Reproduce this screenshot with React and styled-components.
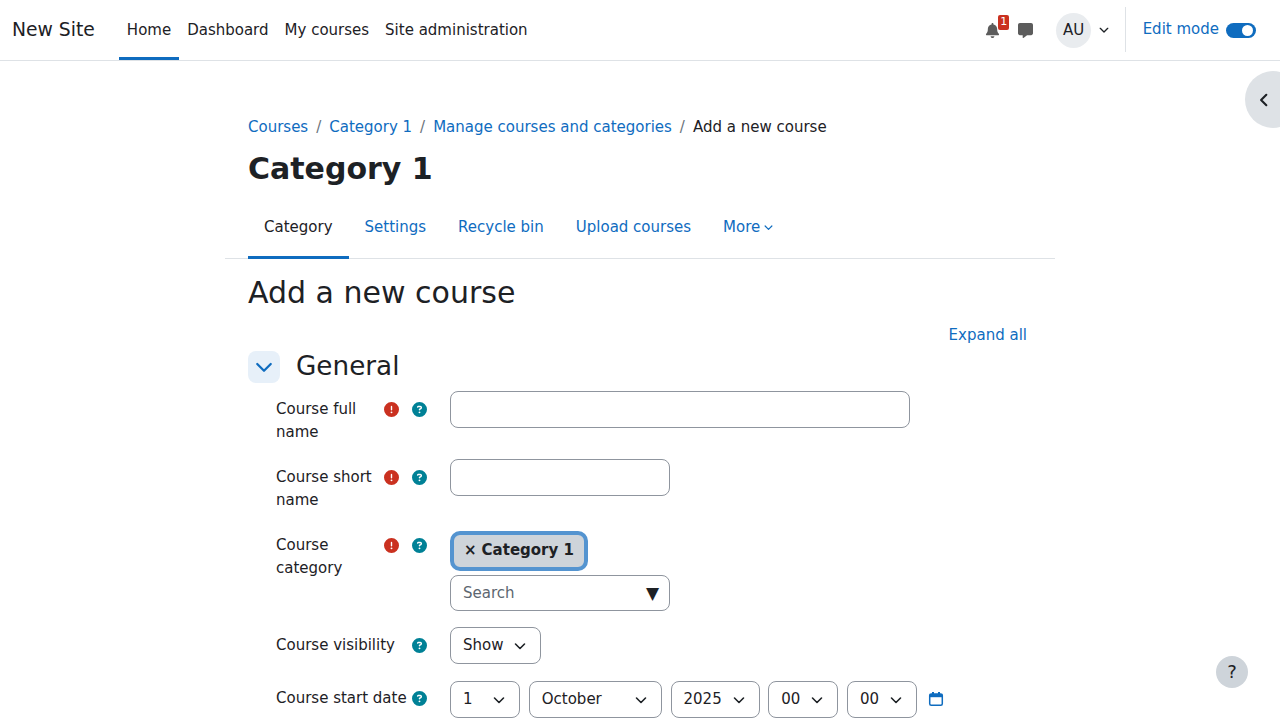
import React from 'react';
import styled, { createGlobalStyle } from 'styled-components';
import { FaBell, FaMessage, FaCircleExclamation, FaCircleQuestion } from 'react-icons/fa6';

const Global = createGlobalStyle`
  html, body { margin: 0; padding: 0; height: 720px; overflow: hidden; background: #fff; }
  body { font-family: "DejaVu Sans", sans-serif; font-size: 15px; line-height: 22.5px; color: #1d2125; }
  * { box-sizing: border-box; }
`;

const Page = styled.div`
  position: relative;
  width: 1280px;
  height: 720px;
  overflow: hidden;
`;
const NavBar = styled.header`
  display: flex;
  align-items: stretch;
  height: 61px;
  border-bottom: 1px solid #dee2e6;
  padding: 0 24px 0 12px;
`;
const Brand = styled.div`
  font-size: 18.75px;
  line-height: 59px;
  margin-right: 24px;
`;
const NavLink = styled.div`
  display: flex;
  align-items: center;
  padding: 3px 8px 0;
  color: #1d2125;
  height: 60px;
  border-bottom: 3px solid ${p => (p.$active ? '#0f6cbf' : 'transparent')};
`;
const NavSpacer = styled.div`flex: 1;`;
const NavIcon = styled.div`
  position: relative;
  width: 16px;
  display: flex;
  align-items: center;
  justify-content: center;
  color: #5c5c5c;
  margin-left: ${p => p.$ml || 0}px;
`;
const Badge = styled.span`
  position: absolute;
  top: 15px;
  left: 14px;
  width: 11px;
  height: 15px;
  background: #ca3120;
  color: #fff;
  border-radius: 2px;
  font-size: 11px;
  line-height: 14px;
  text-align: center;
`;
const Avatar = styled.div`
  align-self: center;
  width: 35px;
  height: 35px;
  margin-left: 22.5px;
  padding-left: 1px;
  border-radius: 50%;
  background: #e9ecef;
  font-size: 15px;
  display: flex;
  align-items: center;
  justify-content: center;
`;
const AvatarCaret = styled.div`
  display: flex;
  align-items: center;
  margin-left: 8px;
  margin-right: 16px;
`;
const NavDivider = styled.div`
  align-self: center;
  width: 1px;
  height: 45px;
  background: #dee2e6;
  margin-top: -1px;
`;
const EditMode = styled.div`
  display: flex;
  align-items: center;
  margin-left: 17px;
  padding-bottom: 2px;
  color: #0f6cbf;
`;
const Toggle = styled.span`
  display: block;
  position: relative;
  width: 30px;
  height: 15px;
  margin-left: 7px;
  margin-top: 2px;
  background: #0f6cbf;
  border-radius: 8px;
  &::after {
    content: '';
    position: absolute;
    top: 2px;
    right: 3px;
    width: 11px;
    height: 11px;
    border-radius: 50%;
    background: #fff;
  }
`;
const DrawerToggle = styled.div`
  position: absolute;
  top: 71px;
  right: -21px;
  width: 56px;
  height: 57px;
  border-radius: 50%;
  background: #dee2e6;
  display: flex;
  align-items: center;
  padding-left: 12px;
`;
const HelpButton = styled.div`
  position: absolute;
  top: 656px;
  left: 1216px;
  width: 32px;
  height: 32px;
  border-radius: 50%;
  background: #ced4da;
  font-size: 18px;
  display: flex;
  align-items: center;
  justify-content: center;
`;
const Main = styled.main`
  width: 830px;
  margin: 0 auto;
`;
const Inner = styled.div`
  padding: 0 23px;
`;
const Crumbs = styled.nav`
  display: flex;
  padding-top: 55px;
  height: 77px;
`;
const Crumb = styled.span`
  color: ${p => (p.$current ? '#1d2125' : '#0f6cbf')};
`;
const Sep = styled.span`
  color: #6a737b;
  padding: 0 8px;
`;
const Title = styled.h1`
  margin: 13px 0 0;
  font-size: 30px;
  line-height: 36px;
  font-weight: 700;
  height: 36px;
`;
const Tabs = styled.div`
  display: flex;
  margin-top: 11px;
  padding-left: 23px;
  height: 61px;
  border-bottom: 1px solid #dee2e6;
`;
const Tab = styled.div`
  display: flex;
  align-items: center;
  padding: 0 16px;
  height: 61px;
  color: ${p => (p.$active ? '#1d2125' : '#0f6cbf')};
  border-bottom: ${p => (p.$active ? '3px solid #0f6cbf' : 'none')};
  padding-bottom: ${p => (p.$active ? '0' : '3px')};
`;
const MoreCaret = styled.span`
  display: flex;
  margin-left: 4px;
`;
const PageHeading = styled.h2`
  margin: 16px 0 0;
  font-size: 30px;
  line-height: 36px;
  font-weight: 400;
`;
const ExpandRow = styled.div`
  display: flex;
  justify-content: flex-end;
  color: #0f6cbf;
  margin-top: 13px;
  padding-right: 5px;
  height: 23px;
`;
const SectionHead = styled.div`
  display: flex;
  align-items: center;
  margin-top: 4px;
  height: 32px;
`;
const Collapse = styled.div`
  width: 32px;
  height: 32px;
  border-radius: 8px;
  background: #e7f0f9;
  color: #0f6cbf;
  display: flex;
  align-items: center;
  justify-content: center;
  margin-right: 16px;
`;
const SectionTitle = styled.h3`
  margin: 0;
  padding-bottom: 2px;
  font-size: 26.25px;
  font-weight: 400;
  line-height: 32px;
`;
const Row = styled.div`
  display: grid;
  grid-template-columns: 174px 1fr;
  margin-left: 28px;
  margin-top: ${p => p.$mt || 0}px;
`;
const LabelCell = styled.div`
  display: flex;
`;
const LabelText = styled.label`
  width: ${p => p.$w || 108}px;
  padding-top: ${p => p.$top}px;
  line-height: 23px;
  flex: none;
`;
const LabelIcons = styled.div`
  display: flex;
  gap: 13px;
  padding-top: ${p => p.$top}px;
  height: 36px;
`;
const HelpIcon = styled(FaCircleQuestion)`
  color: #008196;
  display: block;
`;
const ReqIcon = styled(FaCircleExclamation)`
  color: #ca3120;
  display: block;
`;
const TextInput = styled.div`
  width: ${p => p.$w}px;
  height: 37px;
  border: 1px solid #8f959e;
  border-radius: 8px;
  background: #fff;
`;
const Stack = styled.div`
  display: flex;
  flex-direction: column;
  align-items: flex-start;
`;
const Chip = styled.div`
  display: flex;
  align-items: center;
  height: 40px;
  width: 138px;
  padding: 0 0 2px 10px;
  border: 4px solid #5494d0;
  border-radius: 10px;
  background: #ced4da;
  font-weight: 700;
  margin-top: 4px;
  white-space: pre;
`;
const ChipX = styled.span`
  margin-right: 5px;
`;
const SearchBox = styled.div`
  display: flex;
  align-items: center;
  justify-content: space-between;
  width: 220px;
  height: 36px;
  margin-top: 4px;
  border: 1px solid #8f959e;
  border-radius: 8px;
  padding: 0 10px 0 12px;
  color: #5c6670;
`;
const Arrow = styled.span`
  color: #1d2125;
  font-size: 17px;
`;
const Select = styled.div`
  display: flex;
  align-items: center;
  justify-content: space-between;
  width: ${p => p.$w}px;
  height: 37px;
  border: 1px solid #8f959e;
  border-radius: 8px;
  padding: 0 14px 0 12px;
  flex: none;
`;
const DateRow = styled.div`
  display: flex;
  align-items: center;
  gap: 8.75px;
`;
const CalIcon = styled.svg`
  display: block;
  margin-left: 2px;
  margin-bottom: 2px;
`;

const Chevron = ({ size = 12, sw = 1.6, color = 'currentColor', dir = 'down' }) => (
  <svg width={size} height={size} viewBox="0 0 12 12" fill="none" stroke={color} strokeWidth={sw} strokeLinecap="round" strokeLinejoin="round">
    {dir === 'down' ? <path d="M1.5 4l4.5 4.5L10.500 4" /> : <path d="M8 1.500L3.500 6 8 10.500" />}
  </svg>
);

const Label = ({ lines, req, w, top = 7, iconTop = 11 }) => (
  <LabelCell>
    <LabelText $w={w} $top={top}>{lines}</LabelText>
    <LabelIcons $top={iconTop}>
      {req && <ReqIcon size={15} />}
      <HelpIcon size={15} />
    </LabelIcons>
  </LabelCell>
);

const Sel = ({ w, children }) => (
  <Select $w={w}><span>{children}</span><Chevron /></Select>
);

export default function App() {
  return (
    <Page>
      <Global />
      <NavBar>
        <Brand>New Site</Brand>
        <NavLink $active>Home</NavLink>
        <NavLink>Dashboard</NavLink>
        <NavLink>My courses</NavLink>
        <NavLink>Site administration</NavLink>
        <NavSpacer />
        <NavIcon><FaBell size={15} /><Badge>1</Badge></NavIcon>
        <NavIcon $ml={17}><FaMessage size={15} /></NavIcon>
        <Avatar>AU</Avatar>
        <AvatarCaret><Chevron size={10} sw={1.6} /></AvatarCaret>
        <NavDivider />
        <EditMode>Edit mode<Toggle /></EditMode>
      </NavBar>
      <DrawerToggle><Chevron size={14} sw={1.8} dir="left" /></DrawerToggle>
      <HelpButton>?</HelpButton>
      <Main>
        <Inner>
          <Crumbs>
            <Crumb>Courses</Crumb><Sep>/</Sep>
            <Crumb>Category 1</Crumb><Sep>/</Sep>
            <Crumb>Manage courses and categories</Crumb><Sep>/</Sep>
            <Crumb $current>Add a new course</Crumb>
          </Crumbs>
          <Title>Category 1</Title>
        </Inner>
        <Tabs>
          <Tab $active>Category</Tab>
          <Tab>Settings</Tab>
          <Tab>Recycle bin</Tab>
          <Tab>Upload courses</Tab>
          <Tab>More<MoreCaret><Chevron size={9} /></MoreCaret></Tab>
        </Tabs>
        <Inner>
          <PageHeading>Add a new course</PageHeading>
          <ExpandRow>Expand all</ExpandRow>
          <SectionHead>
            <Collapse><Chevron size={18} sw={1.5} /></Collapse>
            <SectionTitle>General</SectionTitle>
          </SectionHead>
          <Row $mt={8}>
            <Label lines={<>Course full<br />name</>} req />
            <TextInput $w={460} />
          </Row>
          <Row $mt={15}>
            <Label lines={<>Course short<br />name</>} req />
            <TextInput $w={220} />
          </Row>
          <Row $mt={15}>
            <Label lines={<>Course<br />category</>} req />
            <Stack>
              <Chip><ChipX>×</ChipX>Category 1</Chip>
              <SearchBox>Search<Arrow>▼</Arrow></SearchBox>
            </Stack>
          </Row>
          <Row $mt={16}>
            <Label lines="Course visibility" w={136} />
            <Sel w={91}>Show</Sel>
          </Row>
          <Row $mt={17}>
            <Label lines="Course start date" w={136} top={6} iconTop={10} />
            <DateRow>
              <Sel w={70}>1</Sel>
              <Sel w={133}>October</Sel>
              <Sel w={89}>2025</Sel>
              <Sel w={70}>00</Sel>
              <Sel w={70}>00</Sel>
              <CalIcon width="16" height="16" viewBox="0 0 16 16" fill="none">
                <rect x="1.700" y="3" width="12.600" height="11.300" rx="1.500" stroke="#0f6cbf" strokeWidth="1.500" />
                <rect x="1.700" y="3" width="12.600" height="3.200" fill="#0f6cbf" />
                <rect x="4" y="1" width="2" height="3" fill="#0f6cbf" />
                <rect x="10" y="1" width="2" height="3" fill="#0f6cbf" />
              </CalIcon>
            </DateRow>
          </Row>
        </Inner>
      </Main>
    </Page>
  );
}
